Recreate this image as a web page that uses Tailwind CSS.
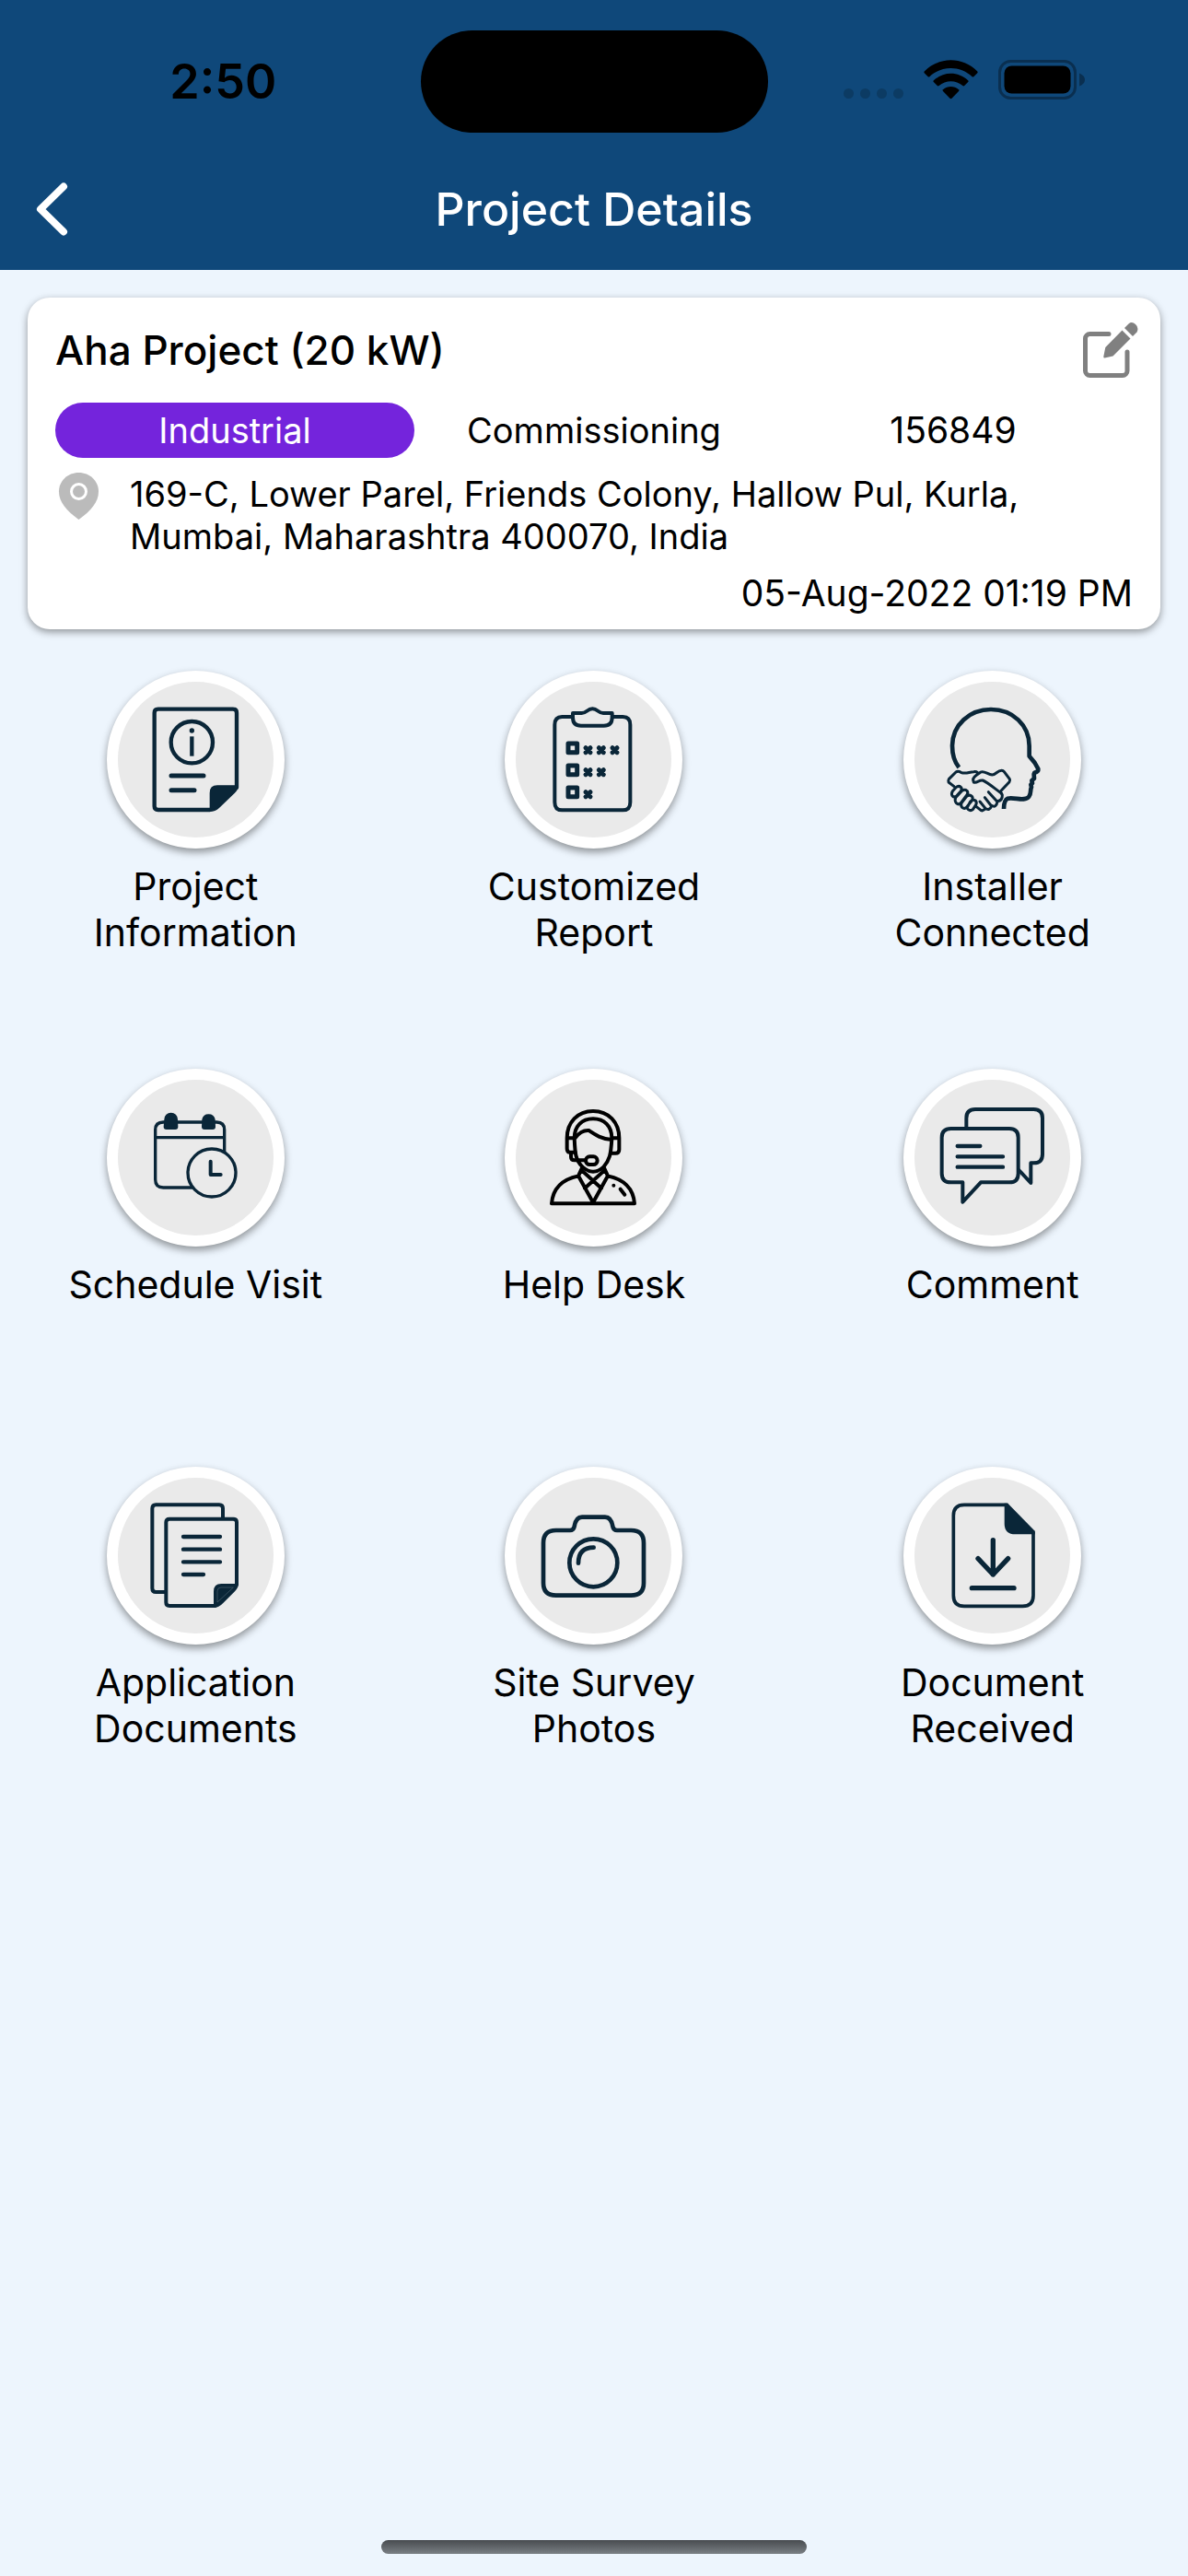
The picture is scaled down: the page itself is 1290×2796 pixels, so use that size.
<!DOCTYPE html>
<html lang="en">
<head>
<meta charset="utf-8">
<meta name="viewport" content="width=device-width, initial-scale=1">
<title>Project Details</title>
<script src="https://cdn.jsdelivr.net/npm/@tailwindcss/browser@4"></script>
</head>
<body class="flex min-h-screen flex-col bg-[#edf5fd] font-['Inter',sans-serif] text-black">

<header class="bg-[#0f487a]">
  <!-- Status bar -->
  <div class="grid h-40 grid-cols-[1fr_377px_1fr] items-center pt-[17px]">
    <span class="pl-7 text-center text-[52px] leading-none font-semibold">2:50</span>
    <div class="h-[111px] rounded-full bg-black"></div>
    <div class="mb-1 flex items-center justify-end gap-[22px] pr-28">
      <svg class="h-[43px] w-[65px]" viewBox="0 0 65 43" fill="#0c3b63" aria-hidden="true"><circle cx="5.500" cy="36.500" r="5.500"/><circle cx="23.500" cy="36.500" r="5.500"/><circle cx="41.500" cy="36.500" r="5.500"/><circle cx="59.500" cy="36.500" r="5.500"/></svg>
      <svg class="h-[43px] w-[59px]" viewBox="0 0 59 43" aria-label="Wi-Fi" role="img">
        <path d="M0.700 12.500C17 -3.700 42 -3.700 58.300 12.500Q59 13.300 58.300 14.200L54.300 18.200Q53.500 18.900 52.600 18.200C39.500 6 19.500 6 6.400 18.200Q5.500 18.900 4.700 18.200L0.700 14.200Q0 13.300 0.700 12.500Z"/>
        <path d="M10.800 22.300C21.500 12.300 37.500 12.300 48.200 22.300Q49 23.200 48.200 24.100L44.200 28Q43.300 28.800 42.400 28C35 21.500 24 21.500 16.600 28Q15.700 28.800 14.800 28L10.800 24.100Q10 23.200 10.800 22.300Z"/>
        <path d="M21 32.200C26 28 33 28 38 32.200Q38.900 33.100 38 34.100L30.500 41.700Q29.500 42.600 28.500 41.700L21 34.100Q20.100 33.100 21 32.200Z"/>
      </svg>
      <svg class="h-[43px] w-[94px]" viewBox="0 0 94 43" aria-label="Battery" role="img">
        <rect x="1.500" y="1.500" width="82" height="40" rx="12" fill="none" stroke="#0a2f50" stroke-width="3"/>
        <rect x="6.500" y="6.500" width="72" height="30" rx="8"/>
        <path d="M88 14.500q6 2.500 6 7t-6 7z" fill="#0a2f50"/>
      </svg>
    </div>
  </div>
  <!-- Navigation bar -->
  <div class="grid h-[133px] grid-cols-[120px_1fr_120px] items-center">
    <button type="button" aria-label="Back" class="flex h-full items-center pl-9">
      <svg class="h-16 w-10" viewBox="0 0 40 64" fill="none" stroke="#fff" stroke-width="8" stroke-linecap="round" stroke-linejoin="round"><path d="M33 7.500L8 32l25 24.500"/></svg>
    </button>
    <h1 class="text-center text-[50px] leading-none font-medium text-white">Project Details</h1>
  </div>
</header>

<main>
  <section class="mx-[30px] mt-[30px] rounded-3xl bg-white px-[30px] pt-[27px] pb-4 text-[38px] leading-[46px] shadow-[0_3px_9px_rgba(0,0,0,0.4)]">
    <div class="flex items-center justify-between">
      <h2 class="text-[44px] font-medium">Aha Project (20 kW)</h2>
      <button type="button" aria-label="Edit project" class="-mr-[6px]">
        <svg class="block size-[60px]" viewBox="0 0 60 60" fill="#808080">
          <path d="M28 12.500H7.500a5 5 0 0 0-5 5V52.500a5 5 0 0 0 5 5H43a5 5 0 0 0 5-5V32" fill="none" stroke="#808080" stroke-width="5" stroke-linecap="round"/>
          <path d="M42.500 8.500L51.500 17.500 32.500 36.500 23.500 38.500Q22 38.500 22.300 37L24.300 27Z"/>
          <path d="M45 6L49.500 1.500Q53 -1.500 57 2T58.500 10.500L54 15Z"/>
        </svg>
      </button>
    </div>
    <div class="mt-[27px] grid grid-cols-3 items-center text-center leading-[60px]">
      <span class="rounded-full bg-[#7424dc] text-white">Industrial</span>
      <span>Commissioning</span>
      <span class="text-[39px]">156849</span>
    </div>
    <div class="mt-4 flex items-start gap-[34px]">
      <svg class="h-[51px] w-[47px] shrink-0" viewBox="0 0 47 51" aria-hidden="true">
        <path d="M25.500 0C13.500 0 4 9 4 20.500C4 32 12 41 25.500 51C39 41 47 32 47 20.500C47 9 37.500 0 25.500 0Z" fill="#bbb"/>
        <circle cx="25.500" cy="20.500" r="8" fill="none" stroke="#fff" stroke-width="3"/>
      </svg>
      <p>169-C, Lower Parel, Friends Colony, Hallow Pul, Kurla, Mumbai, Maharashtra 400070, India</p>
    </div>
    <p class="mt-4 text-right text-[39px]">05-Aug-2022 01:19 PM</p>
  </section>

  <nav aria-label="Project sections" class="mt-[45px] grid auto-rows-[432px] grid-cols-3 gap-x-12 px-5 text-center text-[41px] leading-[50px]">
    <a href="#information" class="flex flex-col items-center gap-4">
      <span class="rounded-full border-[12px] border-white bg-[#eaeaea] shadow-[0_4px_8px_rgba(0,0,0,0.4)]">
        <svg class="block size-[169px]" viewBox="84 90 507 507" fill="none" stroke="#0a2638" stroke-width="13" stroke-linecap="round" stroke-linejoin="round" aria-hidden="true">
          <path d="M384 507H215q-12 0-12-12V191q0-12 12-12H459q12 0 12 12V434"/>
          <circle cx="325" cy="287" r="68"/>
          <path d="M325 268V332" stroke-linecap="butt"/><circle cx="325" cy="249" r="8" fill="#0a2638" stroke="none"/>
          <path d="M258 396H363M258 443H333" stroke-width="15"/>
          <path d="M383 513V452Q383 427 408 427H477Q477 441 464 453L414 501Q402 513 383 513Z" fill="#0a2638" stroke="none"/>
        </svg>
      </span>
      <span class="w-72">Project Information</span>
    </a>
    <a href="#report" class="flex flex-col items-center gap-4">
      <span class="rounded-full border-[12px] border-white bg-[#eaeaea] shadow-[0_4px_8px_rgba(0,0,0,0.4)]">
        <svg class="block size-[169px]" viewBox="87 90 507 507" fill="none" stroke="#0a2638" stroke-width="12" stroke-linecap="round" stroke-linejoin="round" aria-hidden="true">
          <path d="M270 204H238Q214 204 214 230V482Q214 508 238 508H436Q460 508 460 482V230Q460 204 436 204H404"/>
          <path d="M273 192H302C318 192 320 178 337 178S356 192 372 192H401V206Q401 233 374 233H300Q273 233 273 206Z"/>
          <g stroke-width="15"><rect x="258" y="291" width="29" height="29"/><rect x="258" y="363" width="29" height="29"/><rect x="258" y="435" width="29" height="29"/></g>
          <path d="M315 305l15 15m0-15l-15 15M358 305l15 15m0-15l-15 15M402 305l15 15m0-15l-15 15M315 377l15 15m0-15l-15 15M358 377l15 15m0-15l-15 15M315 449l15 15m0-15l-15 15" stroke-width="15"/>
        </svg>
      </span>
      <span class="w-72">Customized Report</span>
    </a>
    <a href="#installer" class="flex flex-col items-center gap-4">
      <span class="rounded-full border-[12px] border-white bg-[#eaeaea] shadow-[0_4px_8px_rgba(0,0,0,0.4)]">
        <svg class="block size-[169px]" viewBox="87 90 507 507" fill="none" stroke="#0a2638" stroke-width="9" stroke-linecap="round" stroke-linejoin="round" aria-hidden="true">
          <path d="M232 369C216 350 210 327 210 298C211 230 266 180 336 180C407 180 461 231 461 299V332L479 354L490 374Q491 382 478 386L476 391L477 405L469 412L471 420L466 425L468 433C463 444 468 454 460 464C446 482 411 464 391 470Q378 476 378 504" stroke-width="14" stroke-linecap="butt"/>
          <path d="M216 431L198 417Q196 412 199 407L222 384Q229 379 238 385C255 392 265 383 280 383Q288 382 292 385M280 417C275 408 279 401 289 394L303 384C314 379 326 392 340 393C352 393 357 379 371 379Q376 379 379 383L397 407Q399 412 396 416L369 445M280 417C291 421 297 409 309 411C323 416 344 434 370 453"/>
          <path d="M211 446L222 434Q231 427 238 433Q243 438 238 446L224 462Q216 468 210 461Q206 455 211 446ZM221 467L242 445Q251 439 258 445Q263 451 258 458L238 485Q231 492 223 485Q217 477 221 467ZM240 485L257 463Q267 456 274 463Q279 469 274 477L256 499Q250 505 242 499Q237 493 240 485ZM259 499L269 480Q277 471 286 477Q291 483 287 491L277 506Q270 512 262 506Q258 503 259 499ZM288 496L304 509Q312 512 318 502L300 480M317 502Q332 511 338 495L316 467M338 493Q353 502 357 481L328 449M357 479Q374 477 373 459L370 453"/>
        </svg>
      </span>
      <span class="w-72">Installer Connected</span>
    </a>
    <a href="#schedule" class="flex flex-col items-center gap-4">
      <span class="rounded-full border-[12px] border-white bg-[#eaeaea] shadow-[0_4px_8px_rgba(0,0,0,0.4)]">
        <svg class="block size-[169px]" viewBox="84 90 507 507" fill="none" stroke="#0a2638" stroke-width="10" stroke-linecap="round" stroke-linejoin="round" aria-hidden="true">
          <path d="M326 441H232Q206 441 206 415V253Q206 228 232 228H406Q431 228 431 253V324M206 278H431"/>
          <path d="M233 243L235 219A22 22 0 0 1 279 219L280 243Q280 252 271 252H242Q233 252 233 243ZM357 243L358 219A22 22 0 0 1 401 219L402 243Q402 252 393 252H366Q357 252 357 243Z" fill="#0a2638" stroke="none"/>
          <circle cx="390" cy="393" r="78"/>
          <path d="M386 356V399H419" stroke-width="12"/>
        </svg>
      </span>
      <span class="w-72">Schedule Visit</span>
    </a>
    <a href="#help" class="flex flex-col items-center gap-4">
      <span class="rounded-full border-[12px] border-white bg-[#eaeaea] shadow-[0_4px_8px_rgba(0,0,0,0.4)]">
        <svg class="block size-[169px]" viewBox="87 90 507 507" fill="none" stroke="#000" stroke-width="12" stroke-linecap="round" stroke-linejoin="round" aria-hidden="true">
          <path d="M254 280C254 228 289 192 339 192S424 228 424 280V317Q424 329 412 329H400M254 280V314Q254 326 264 326H281M278 280C278 240 303 217 339 217S400 240 400 280M254 280H278M400 280H424"/>
          <path d="M278 278C280 325 280 350 305 374Q322 389 339 389T373 374C393 350 397 335 400 282M281 279C295 260 310 254 325 255C343 267 365 283 400 285"/>
          <path d="M267 328V341Q267 352 279 352H315"/>
          <rect x="315" y="340" width="38" height="26" rx="13"/>
          <path d="M303 377L291 403C239 414 208 441 204 493H474C470 441 439 414 387 403L375 377M291 403L339 490L387 403M301 384L366 443M377 384L312 443" />
          <path d="M428 446L442 464"/><circle cx="406" cy="434" r="6" fill="#000" stroke="none"/>
        </svg>
      </span>
      <span class="w-72">Help Desk</span>
    </a>
    <a href="#comment" class="flex flex-col items-center gap-4">
      <span class="rounded-full border-[12px] border-white bg-[#eaeaea] shadow-[0_4px_8px_rgba(0,0,0,0.4)]">
        <svg class="block size-[169px]" viewBox="87 90 507 507" fill="none" stroke="#0a2638" stroke-width="12" stroke-linecap="round" stroke-linejoin="round" aria-hidden="true">
          <path d="M206 249H396Q425 249 425 278V395Q425 424 396 424H303L244 488V424H206Q176 424 176 395V278Q176 249 206 249Z"/>
          <path d="M256 246V215Q256 186 285 186H475Q504 186 504 215V332Q504 361 475 361H466V426L427 384"/>
          <path d="M227 306H301M227 340H375M227 374H375" stroke-width="13"/>
        </svg>
      </span>
      <span class="w-72">Comment</span>
    </a>
    <a href="#documents" class="flex flex-col items-center gap-4">
      <span class="rounded-full border-[12px] border-white bg-[#eaeaea] shadow-[0_4px_8px_rgba(0,0,0,0.4)]">
        <svg class="block size-[169px]" viewBox="84 87 507 507" fill="none" stroke="#0a2638" stroke-width="12" stroke-linecap="round" stroke-linejoin="round" aria-hidden="true">
          <path d="M236 459H208Q196 459 196 447V187Q196 175 208 175H414Q426 175 426 187V216"/>
          <path d="M400 504H252Q241 504 241 493V232Q241 221 252 221H460Q471 221 471 232V434"/>
          <path d="M297 279H417M297 320H417M297 361H417M297 402H363" stroke-width="13"/>
          <path d="M396 510V457Q396 432 421 432H477Q477 444 465 457L426 496Q413 510 396 510Z" fill="#0a2638" stroke="none"/>
          <path d="M408 491V456Q408 444 420 444H459Z" stroke="#4c616e" stroke-width="2"/>
        </svg>
      </span>
      <span class="w-72">Application Documents</span>
    </a>
    <a href="#photos" class="flex flex-col items-center gap-4">
      <span class="rounded-full border-[12px] border-white bg-[#eaeaea] shadow-[0_4px_8px_rgba(0,0,0,0.4)]">
        <svg class="block size-[169px]" viewBox="87 87 507 507" fill="none" stroke="#0a2638" stroke-width="14" stroke-linecap="round" stroke-linejoin="round" aria-hidden="true">
          <path d="M218 258H264Q275 258 278 245C281 228 287 215 303 215H378C394 215 400 228 403 245Q406 258 417 258H463Q504 258 504 299V430Q504 470 463 470H218Q177 470 177 430V299Q177 258 218 258Z"/>
          <circle cx="340" cy="364" r="78"/>
          <path d="M291 365Q291 314 341 314"/>
        </svg>
      </span>
      <span class="w-72">Site Survey Photos</span>
    </a>
    <a href="#received" class="flex flex-col items-center gap-4">
      <span class="rounded-full border-[12px] border-white bg-[#eaeaea] shadow-[0_4px_8px_rgba(0,0,0,0.4)]">
        <svg class="block size-[169px]" viewBox="87 87 507 507" fill="none" stroke="#0a2638" stroke-width="11" stroke-linecap="round" stroke-linejoin="round" aria-hidden="true">
          <path d="M388 175H249Q214 175 214 210V470Q214 505 249 505H439Q474 505 474 470V264"/>
          <path d="M380 170H391L479 260V271H416Q380 271 380 236Z" fill="#0a2638" stroke="none"/>
          <path d="M343 290V402M294 350L343 402L392 350M274 446H411" stroke-width="16"/>
        </svg>
      </span>
      <span class="w-72">Document Received</span>
    </a>
  </nav>
</main>

<!-- Home indicator -->
<footer class="mt-auto flex justify-center pb-6">
  <div class="h-[15px] w-[462px] rounded-full bg-linear-to-b from-[#484c50] to-[#7b8085]"></div>
</footer>
</body>
</html>
